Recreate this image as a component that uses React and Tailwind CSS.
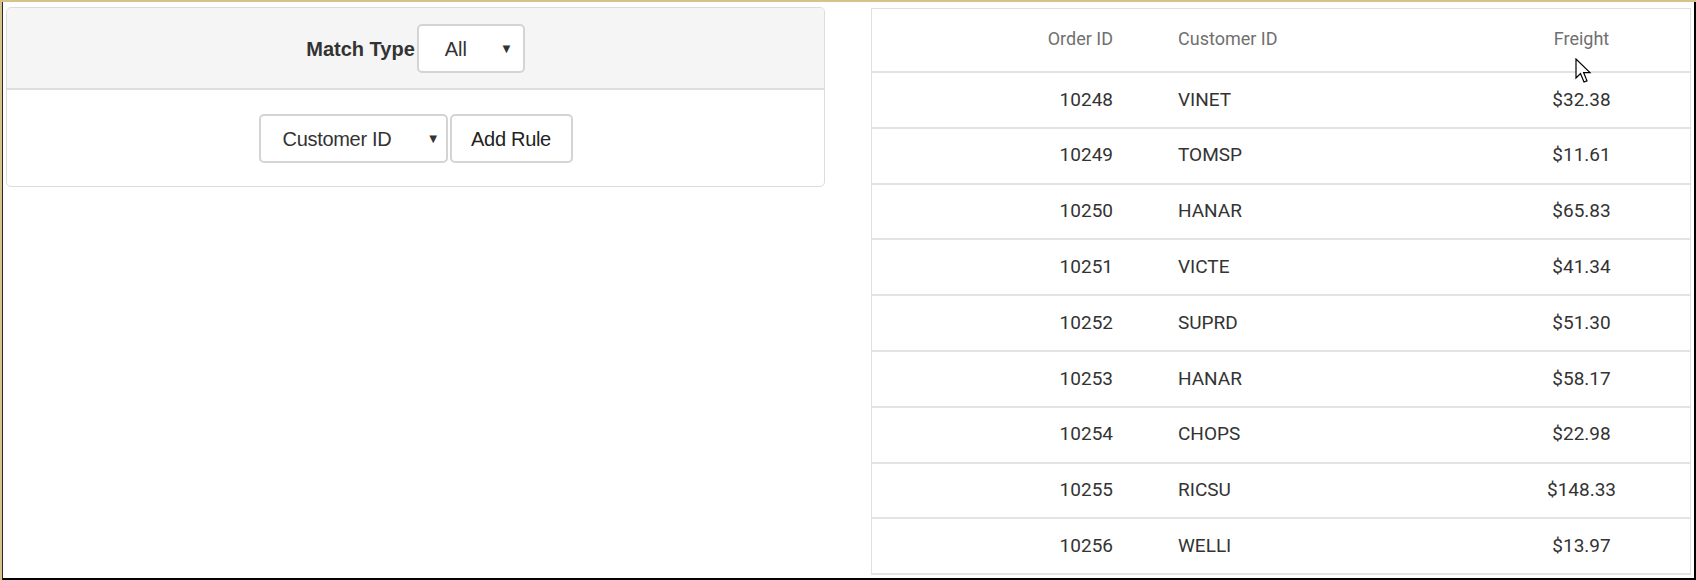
import { useState } from 'react'

const orders = [
  { id: 10248, customer: 'VINET', freight: '$32.38' },
  { id: 10249, customer: 'TOMSP', freight: '$11.61' },
  { id: 10250, customer: 'HANAR', freight: '$65.83' },
  { id: 10251, customer: 'VICTE', freight: '$41.34' },
  { id: 10252, customer: 'SUPRD', freight: '$51.30' },
  { id: 10253, customer: 'HANAR', freight: '$58.17' },
  { id: 10254, customer: 'CHOPS', freight: '$22.98' },
  { id: 10255, customer: 'RICSU', freight: '$148.33' },
  { id: 10256, customer: 'WELLI', freight: '$13.97' },
]

function Caret() {
  return <span className="text-[13px] leading-none text-[#333]">▼</span>
}

function Cursor() {
  return (
    <svg width="20" height="28" viewBox="0 0 20 28" className="absolute left-[1573px] top-[56px]">
      <path
        d="M1 1 L1 20 L5.5 15.5 L9 24 L12 22.8 L8.6 14.6 L15 14.6 Z"
        fill="#fff"
        stroke="#000"
        strokeWidth="1.2"
        strokeLinejoin="miter"
      />
    </svg>
  )
}

export default function App() {
  const [matchType] = useState('All')

  return (
    <div className="relative w-[1696px] h-[580px] overflow-hidden bg-white border-t-2 border-l-2 border-[#d6c38b]">
      <div className="h-full border-l border-l-[#2a2a2a] border-r-2 border-b-2 border-r-black border-b-black pl-[3px] pt-[5px] flex items-start gap-[46px]">
        {/* Query builder */}
        <div
          className="w-[819px] h-[180px] rounded-[5px] border border-[#dcdcdc] overflow-hidden"
          style={{ fontFamily: '"Liberation Sans", Arial, sans-serif' }}
        >
          <div className="h-[82px] bg-[#f5f5f5] border-b-2 border-[#dedede] flex items-center justify-center pt-[1px]">
            <span className="text-[20px] font-bold text-[#333] mr-[2px]">Match Type</span>
            <div className="w-[108px] h-[49px] bg-white rounded-[5px] border-2 border-[#d4d4d4] flex items-center justify-between pl-[26px] pr-[10px]">
              <span className="text-[20px] text-[#333]">{matchType}</span>
              <Caret />
            </div>
          </div>
          <div className="flex items-start justify-center gap-[2px] pt-[24px]">
            <div className="w-[189px] h-[49px] bg-white rounded-[5px] border-2 border-[#d4d4d4] flex items-center justify-between pl-[22px] pr-[6px]">
              <span className="text-[20px] text-[#333] tracking-[-0.3px]">Customer ID</span>
              <Caret />
            </div>
            <button className="w-[123px] h-[49px] bg-white rounded-[5px] border-2 border-[#d4d4d4] text-[20px] text-[#222] tracking-[-0.3px]">
              Add Rule
            </button>
          </div>
        </div>

        {/* Grid */}
        <div
          className="w-[820px] mt-[1px] border-t border-l border-r border-[#e0e0e0]"
          style={{ fontFamily: 'Roboto, "Liberation Sans", sans-serif' }}
        >
          <div className="h-[64px] border-b-2 border-[#e3e3e3] flex items-center text-[18px] text-[#707070] pb-[4px]">
            <div className="w-[264px] pr-[23px] text-right">Order ID</div>
            <div className="w-[339px] pl-[42px]">Customer ID</div>
            <div className="w-[213px] text-center">Freight</div>
          </div>
          {orders.map((o) => (
            <div key={o.id} className="h-[55.8px] border-b-2 border-[#e3e3e3] flex items-center text-[19px] text-[#333]">
              <div className="w-[264px] pr-[23px] text-right">{o.id}</div>
              <div className="w-[339px] pl-[42px]">{o.customer}</div>
              <div className="w-[213px] text-center">{o.freight}</div>
            </div>
          ))}
        </div>
      </div>
      <Cursor />
    </div>
  )
}
